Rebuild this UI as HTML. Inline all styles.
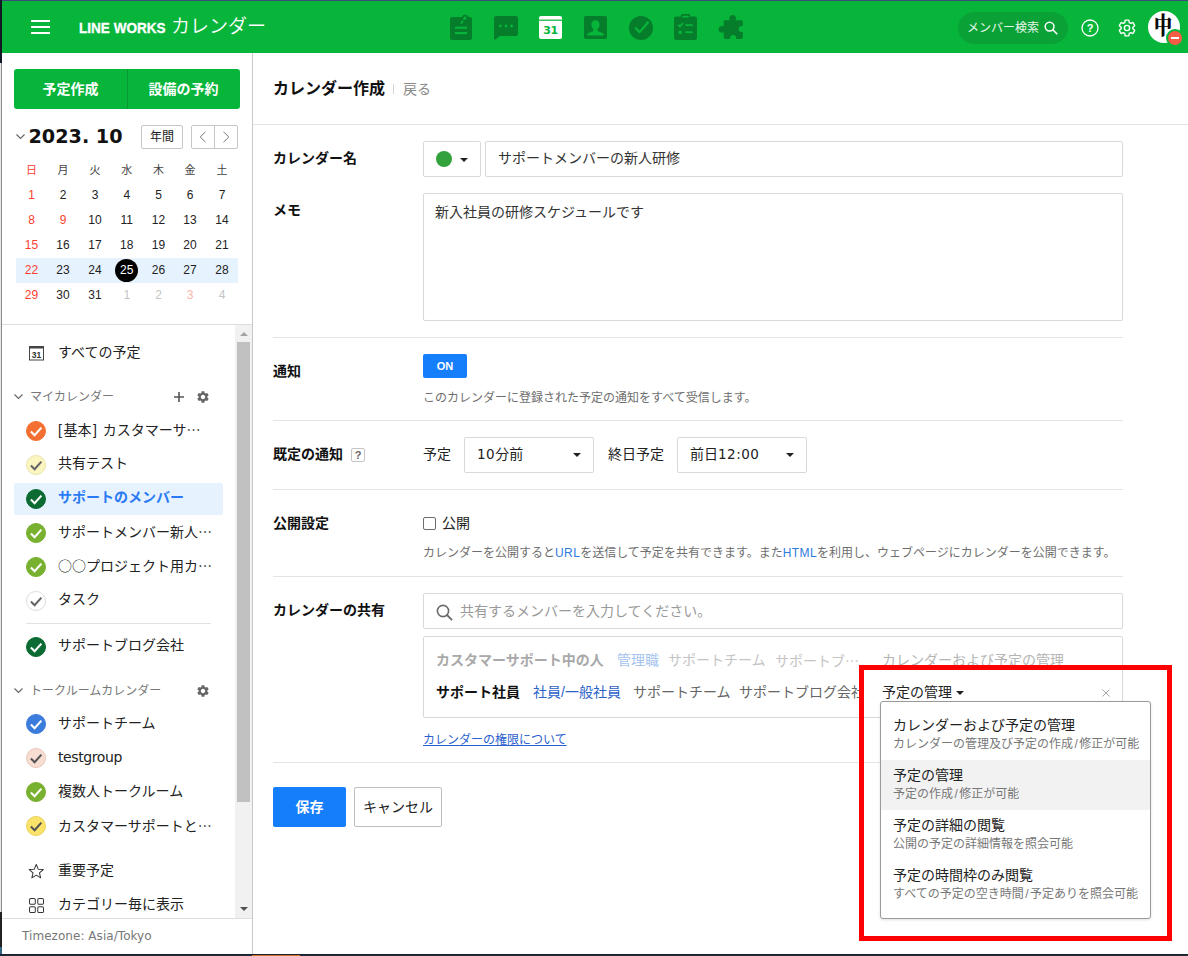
<!DOCTYPE html>
<html lang="ja">
<head>
<meta charset="utf-8">
<title>LINE WORKS カレンダー</title>
<style>
*{box-sizing:border-box;margin:0;padding:0}
html,body{width:1188px;height:956px;overflow:hidden;background:#fff}
body{position:relative;font-family:"Liberation Sans","Noto Sans CJK JP",sans-serif;font-size:14px;color:#222;-webkit-font-smoothing:antialiased}
.abs{position:absolute}
.dj{font-family:"DejaVu Sans","Liberation Sans",sans-serif;font-size:13.5px;letter-spacing:.5px}
.j{font-family:"Noto Sans CJK JP",sans-serif}
.t{position:absolute;white-space:nowrap;line-height:20px;height:20px}
/* window chrome edges */
#edgeL{left:0;top:0;width:2px;height:956px;background:linear-gradient(to right,#e6e6e6 0,#e6e6e6 1px,#8c8c8c 1px,#8c8c8c 2px)}
#edgeL2{left:0;top:0;width:2px;height:63px;background:#131826}
#edgeT{left:0;top:0;width:1188px;height:1px;background:#3e4b7c}
#edgeB{left:0;top:954px;width:1188px;height:2px;background:linear-gradient(#1a222b 0,#1a222b 1px,#222d38 1px)}
/* header */
#hdr{left:2px;top:1px;width:1186px;height:52px;background:#07b53b}
.hb{position:absolute;left:31px;width:19px;height:2px;background:#fff}
#brand{left:79px;top:17.5px;font:bold 15.5px/20px "Liberation Sans",sans-serif;color:#fff;transform:scaleX(.875);transform-origin:0 50%;-webkit-text-stroke:.35px #fff}
#appname{left:171px;top:14px;font-size:19px;line-height:26px;height:26px;color:#fff;font-weight:350}
#msearch{left:958px;top:12px;width:110px;height:32px;border-radius:16px;background:#0aa237}
#msearch span{position:absolute;left:9px;top:6px;font-size:12px;line-height:20px;color:#e6f6ea}
/* sidebar */
#sideBorder{left:252px;top:53px;width:1px;height:901px;background:#c8c8c8}
#btns{left:14px;top:69px;width:226px;height:40px;background:#07b53b;border-radius:3px}
#btns i{position:absolute;left:113px;top:0;width:1px;height:40px;background:#069a33}
#btns span{position:absolute;top:9.5px;width:113px;text-align:center;color:#fff;font-weight:bold;font-size:14px;line-height:20px}
#ym{left:28.5px;top:124px;font:bold 19.2px/26px "DejaVu Sans","Liberation Sans",sans-serif;color:#111;height:26px}
.sbtn{position:absolute;top:125px;height:24px;border:1px solid #c6c6c6;border-radius:2px;background:#fff}
.cal{position:absolute;width:32px;text-align:center;font-size:12px;line-height:20px;height:20px;color:#222}
.cal.wd{font-size:11px;color:#444}
.red{color:#fa3e30 !important}
.dim{color:#c4c4c4 !important}
.dimred{color:#fbb5ae !important}
#wkhl{left:16px;top:258px;width:222px;height:25px;background:#e6f2fe}
#today{left:115px;top:259px;width:23px;height:23px;border-radius:50%;background:#000}
#sep1{left:2px;top:324px;width:250px;height:1px;background:#dedede}
#sbtrack{left:235px;top:325px;width:17px;height:593px;background:#f1f1f1}
#sbthumb{left:237px;top:342px;width:13px;height:460px;background:#c1c1c1}
.item{position:absolute;left:58px;font-size:14px;line-height:22px;height:22px;white-space:nowrap;color:#222}
.grp{position:absolute;left:30px;font-size:12px;line-height:20px;height:20px;white-space:nowrap;color:#777}
.ck{position:absolute;left:26px;width:20px;height:20px}
#selhl{left:14px;top:483px;width:209px;height:32px;background:#e6f2fe;border-radius:2px}
#sep2{left:26px;top:623px;width:185px;height:1px;background:#e2e2e2}
#sep3{left:2px;top:918px;width:250px;height:1px;background:#dedede}
#tz{left:22px;top:926px;font:12px/20px "DejaVu Sans","Liberation Sans",sans-serif;color:#777;letter-spacing:0.05px}
/* main */
.hr{position:absolute;height:1px;background:#e4e4e4}
.lbl{position:absolute;left:273px;font-weight:bold;font-size:14px;line-height:20px;height:20px;white-space:nowrap;color:#111}
.box{position:absolute;border:1px solid #d9d9d9;border-radius:2px;background:#fff}
.desc{position:absolute;font-size:12px;line-height:18px;height:18px;white-space:nowrap;color:#6e6e6e}
.desc b{font-weight:normal;color:#2d7bdf;letter-spacing:.4px}
.caret{position:absolute;width:0;height:0;border-left:4px solid transparent;border-right:4px solid transparent;border-top:4px solid #222}
</style>
</head>
<body>
<div class="abs" id="hdr"></div>
<div class="abs" id="edgeT"></div>
<div class="abs" id="edgeL"></div>
<div class="abs" id="edgeL2"></div>
<div class="abs" style="left:0;top:912px;width:2px;height:35px;background:#222"></div><div class="abs" style="left:0;top:947px;width:2px;height:7px;background:#2f6686"></div>
<div class="abs" id="edgeB"></div>
<div class="abs" style="left:252px;top:955px;width:48px;height:1px;background:#c8742c"></div>

<!-- HEADER -->
<div class="hb" style="top:20px"></div><div class="hb" style="top:26px"></div><div class="hb" style="top:32px"></div>
<div class="t" id="brand">LINE WORKS</div>
<div class="t" id="appname">カレンダー</div>
<!--HDRICONS-->
<svg class="abs" style="left:450px;top:14px" width="22" height="26" viewBox="0 0 22 26"><rect x="0" y="3" width="22" height="23" rx="2.2" fill="#067d2b"/><path d="M11 9.5 L15.2 3.6" stroke="#067d2b" stroke-width="5" stroke-linecap="round"/><path d="M11.2 9.2 L14.6 4.4" stroke="#07b53b" stroke-width="1.6" stroke-linecap="round"/><circle cx="14.9" cy="4" r="1.7" fill="#07b53b"/><circle cx="14.9" cy="4" r="2.6" fill="none" stroke="#067d2b" stroke-width="1.2"/><rect x="5" y="12.6" width="12" height="2.2" fill="#07b53b"/><rect x="5" y="18" width="12" height="2.2" fill="#07b53b"/></svg>
<svg class="abs" style="left:494px;top:16px" width="24" height="24" viewBox="0 0 24 24"><path d="M2 0 H22 a2 2 0 0 1 2 2 V18 a2 2 0 0 1 -2 2 H6 L1.2 23.6 Q0 24.3 0 23 V2 a2 2 0 0 1 2 -2 Z" fill="#067d2b"/><circle cx="6.4" cy="10" r="1.4" fill="#07b53b"/><circle cx="12" cy="10" r="1.4" fill="#07b53b"/><circle cx="17.6" cy="10" r="1.4" fill="#07b53b"/></svg>
<svg class="abs" style="left:539px;top:16px" width="23" height="23" viewBox="0 0 23 23"><rect x="0" y="0" width="23" height="23" rx="2" fill="#fff"/><rect x="0" y="3.6" width="23" height="1.2" fill="#07b53b"/><text x="11.5" y="18.2" font-family="DejaVu Sans,Liberation Sans,sans-serif" font-weight="bold" font-size="11" text-anchor="middle" fill="#07b53b" letter-spacing="-0.3">31</text></svg>
<svg class="abs" style="left:584px;top:16px" width="23" height="23" viewBox="0 0 23 23"><rect x="0" y="0" width="23" height="23" rx="2" fill="#067d2b"/><path d="M11.5 4.2 c2.6 0 4.1 1.9 4.1 4.4 c0 1.9 -0.9 3.6 -2 4.5 v1.3 c0 .5 .3 .8 .8 1 l4.300 1.7 c.7 .3 1 .8 1 1.400 V19.6 H3.300 V18.500 c0 -.6 .3 -1.100 1 -1.400 l4.300 -1.700 c.5 -.2 .8 -.5 .8 -1 v-1.300 c-1.100 -.9 -2 -2.600 -2 -4.500 c0 -2.500 1.500 -4.400 4.100 -4.400 z" fill="#07b53b"/></svg>
<svg class="abs" style="left:629px;top:16px" width="24" height="24" viewBox="0 0 24 24"><circle cx="12" cy="12" r="12" fill="#067d2b"/><path d="M6.2 11.6 L10.6 16.2 L19.5 5.8" fill="none" stroke="#07b53b" stroke-width="2.2" stroke-linejoin="miter"/></svg>
<svg class="abs" style="left:674px;top:14px" width="23" height="26" viewBox="0 0 23 26"><rect x="0" y="2.4" width="23" height="23.6" rx="2.2" fill="#067d2b"/><rect x="6.8" y="0" width="9.4" height="5.4" rx="1.6" fill="#067d2b"/><rect x="8.200" y="1.700" width="6.600" height="1.900" rx=".9" fill="#07b53b"/><path d="M4.200 10.800 L5.900 12.500 L9 9.200" fill="none" stroke="#07b53b" stroke-width="1.700"/><rect x="11.400" y="10.200" width="7.400" height="1.800" fill="#07b53b"/><circle cx="6.200" cy="18.200" r="1.800" fill="#07b53b"/><rect x="11.400" y="17.300" width="7.400" height="1.800" fill="#07b53b"/></svg>
<svg class="abs" style="left:718px;top:14px" width="26" height="26" viewBox="0 0 26 26"><path d="M6.500 6.200 H11.800 C11 4.800 11.300 1 14.700 1 C18.100 1 18.400 4.800 17.600 6.200 H23 a1.800 1.800 0 0 1 1.800 1.800 V12.300 C23.400 11.500 20.600 12 20.600 15 C20.600 18 23.400 18.500 24.800 17.700 V23.200 a1.800 1.800 0 0 1 -1.800 1.800 H18 C18.600 23.600 18 21 15.200 21 C12.400 21 11.800 23.600 12.400 25 H7.500 a1.800 1.800 0 0 1 -1.800 -1.800 V18.300 C4.500 19.200 0.600 19.200 0.600 15.300 C0.600 11.400 4.500 11.500 5.700 12.400 V7 a.8 .8 0 0 1 .8 -.8 Z" fill="#067d2b"/></svg>
<!--/HDRICONS-->
<div class="abs" id="msearch"><span>メンバー検索</span></div>
<!--HDRRIGHT-->
<svg class="abs" style="left:1044px;top:21px" width="14" height="14" viewBox="0 0 14 14"><circle cx="5.600" cy="5.600" r="4.400" fill="none" stroke="#fff" stroke-width="1.500"/><path d="M8.800 8.800 L12.800 12.800" stroke="#fff" stroke-width="1.600" stroke-linecap="round"/></svg>
<svg class="abs" style="left:1081px;top:19px" width="18" height="18" viewBox="0 0 18 18"><circle cx="9" cy="9" r="8" fill="none" stroke="#fff" stroke-width="1.300"/><text x="9" y="13" font-family="Liberation Sans,sans-serif" font-weight="bold" font-size="11" text-anchor="middle" fill="#fff">?</text></svg>
<svg class="abs" style="left:1118px;top:19px" width="18" height="18" viewBox="1 1 22 22"><path d="M19.14 12.94c.04-.3.06-.61.06-.94 0-.32-.02-.64-.07-.94l2.03-1.58a.49.49 0 0 0 .12-.61l-1.92-3.32a.488.488 0 0 0-.59-.22l-2.39.96c-.5-.38-1.03-.7-1.62-.94l-.36-2.54a.484.484 0 0 0-.48-.41h-3.84c-.24 0-.43.17-.47.41l-.36 2.54c-.59.24-1.13.57-1.62.94l-2.39-.96c-.22-.08-.47 0-.59.22L2.740 8.870c-.12.21-.08.47.12.61l2.030 1.580c-.05.3-.09.63-.09.94s.02.640.07.940l-2.030 1.580a.49.49 0 0 0-.12.610l1.920 3.320c.12.220.370.290.590.220l2.390-.960c.5.380 1.030.7 1.620.940l.36 2.540c.05.240.240.410.480.410h3.840c.240 0 .440-.170.470-.410l.36-2.540c.590-.240 1.130-.560 1.620-.940l2.390.960c.220.080.470 0 .590-.220l1.920-3.320c.12-.220.070-.470-.12-.610l-2.010-1.580z" fill="none" stroke="#fff" stroke-width="1.700" stroke-linejoin="round"/><circle cx="12" cy="12" r="3.200" fill="none" stroke="#fff" stroke-width="1.700"/></svg>
<div class="abs" style="left:1148px;top:11px;width:32px;height:32px;border-radius:50%;background:#fff;overflow:hidden"><span style="position:absolute;left:3.500px;top:-3px;font-family:'Noto Serif CJK SC','Noto Sans CJK JP',serif;font-weight:900;font-size:22px;line-height:32px;color:#0a0a0a;display:block;transform:scale(.82,1.08);transform-origin:11px 16px">中</span></div>
<div class="abs" style="left:1166px;top:29px;width:18px;height:18px;border-radius:50%;background:#f95c44;border:2px solid #07b53b"><i style="position:absolute;left:3px;top:6px;width:8px;height:2px;background:#fff"></i></div>
<!--/HDRRIGHT-->

<!-- SIDEBAR -->
<div class="abs" id="sideBorder"></div>
<div class="abs" id="btns"><i></i><span style="left:0">予定作成</span><span style="left:113px">設備の予約</span></div>
<!--SIDEBAR-->
<svg class="abs" style="left:16px;top:134px" width="9" height="6" viewBox="0 0 9 6"><path d="M0.5 0.5 L4.5 4.5 L8.5 0.5" fill="none" stroke="#666" stroke-width="1.2"/></svg>
<div class="t" id="ym">2023. 10</div>
<div class="sbtn" style="left:141px;width:42px"><span style="position:absolute;left:0;width:40px;text-align:center;top:1px;font-size:12px;line-height:20px;color:#222">年間</span></div>
<div class="sbtn" style="left:191px;width:47px"><i style="position:absolute;left:22px;top:0;width:1px;height:22px;background:#c6c6c6"></i><svg style="position:absolute;left:7px;top:5px" width="8" height="12" viewBox="0 0 8 12"><path d="M6.5 0.8 L1.2 6 L6.5 11.2" fill="none" stroke="#777" stroke-width="1"/></svg><svg style="position:absolute;left:30px;top:5px" width="8" height="12" viewBox="0 0 8 12"><path d="M1.5 0.8 L6.8 6 L1.5 11.2" fill="none" stroke="#777" stroke-width="1"/></svg></div>
<div class="abs" id="wkhl"></div><div class="abs" id="today"></div>
<div class="cal wd red" style="left:15.5px;top:160px">日</div>
<div class="cal wd" style="left:47.0px;top:160px">月</div>
<div class="cal wd" style="left:79.0px;top:160px">火</div>
<div class="cal wd" style="left:110.8px;top:160px">水</div>
<div class="cal wd" style="left:142.5px;top:160px">木</div>
<div class="cal wd" style="left:174.0px;top:160px">金</div>
<div class="cal wd" style="left:206.0px;top:160px">土</div>
<div class="cal red" style="left:15.5px;top:185px">1</div>
<div class="cal" style="left:47.0px;top:185px">2</div>
<div class="cal" style="left:79.0px;top:185px">3</div>
<div class="cal" style="left:110.8px;top:185px">4</div>
<div class="cal" style="left:142.5px;top:185px">5</div>
<div class="cal" style="left:174.0px;top:185px">6</div>
<div class="cal" style="left:206.0px;top:185px">7</div>
<div class="cal red" style="left:15.5px;top:210px">8</div>
<div class="cal red" style="left:47.0px;top:210px">9</div>
<div class="cal" style="left:79.0px;top:210px">10</div>
<div class="cal" style="left:110.8px;top:210px">11</div>
<div class="cal" style="left:142.5px;top:210px">12</div>
<div class="cal" style="left:174.0px;top:210px">13</div>
<div class="cal" style="left:206.0px;top:210px">14</div>
<div class="cal red" style="left:15.5px;top:235px">15</div>
<div class="cal" style="left:47.0px;top:235px">16</div>
<div class="cal" style="left:79.0px;top:235px">17</div>
<div class="cal" style="left:110.8px;top:235px">18</div>
<div class="cal" style="left:142.5px;top:235px">19</div>
<div class="cal" style="left:174.0px;top:235px">20</div>
<div class="cal" style="left:206.0px;top:235px">21</div>
<div class="cal red" style="left:15.5px;top:260px">22</div>
<div class="cal" style="left:47.0px;top:260px">23</div>
<div class="cal" style="left:79.0px;top:260px">24</div>
<div class="cal" style="color:#fff;left:110.8px;top:260px">25</div>
<div class="cal" style="left:142.5px;top:260px">26</div>
<div class="cal" style="left:174.0px;top:260px">27</div>
<div class="cal" style="left:206.0px;top:260px">28</div>
<div class="cal red" style="left:15.5px;top:285px">29</div>
<div class="cal" style="left:47.0px;top:285px">30</div>
<div class="cal" style="left:79.0px;top:285px">31</div>
<div class="cal dim" style="left:110.8px;top:285px">1</div>
<div class="cal dim" style="left:142.5px;top:285px">2</div>
<div class="cal dimred" style="left:174.0px;top:285px">3</div>
<div class="cal dim" style="left:206.0px;top:285px">4</div>
<div class="abs" id="sep1"></div>
<div class="abs" id="sbtrack"></div><div class="abs" id="sbthumb"></div>
<div class="abs" style="left:240px;top:332px;width:0;height:0;border-left:4px solid transparent;border-right:4px solid transparent;border-bottom:4px solid #a3a3a3"></div>
<div class="abs" style="left:240px;top:907px;width:0;height:0;border-left:4px solid transparent;border-right:4px solid transparent;border-top:4px solid #505050"></div>
<svg class="abs" style="left:29px;top:345px" width="16" height="16" viewBox="0 0 16 16"><rect x="0.5" y="1.5" width="14" height="13.5" fill="#fff" stroke="#444" stroke-width="1"/><rect x="0.5" y="1.5" width="14" height="2" fill="#444"/><text x="7.5" y="12.8" font-family="Liberation Sans,sans-serif" font-weight="bold" font-size="8.5" text-anchor="middle" fill="#333">31</text></svg>
<div class="item" style="top:341px">すべての予定</div>
<svg class="abs" style="left:14px;top:394px" width="9" height="6" viewBox="0 0 9 6"><path d="M0.5 0.5 L4.5 4.5 L8.5 0.5" fill="none" stroke="#666" stroke-width="1.2"/></svg>
<div class="grp" style="top:387px">マイカレンダー</div>
<svg class="abs" style="left:174px;top:392px" width="10" height="10" viewBox="0 0 10 10"><path d="M5 0v10M0 5h10" stroke="#555" stroke-width="1.6"/></svg>
<svg class="abs" style="left:197px;top:391px" width="12" height="12" viewBox="2 2 20 20"><path fill="#666" d="M19.14 12.94c.04-.3.06-.61.06-.94 0-.32-.02-.64-.07-.94l2.03-1.58a.49.49 0 0 0 .12-.61l-1.92-3.32a.488.488 0 0 0-.59-.22l-2.39.96c-.5-.38-1.03-.7-1.62-.94l-.36-2.54a.484.484 0 0 0-.48-.41h-3.84c-.24 0-.43.17-.47.41l-.36 2.54c-.59.24-1.13.57-1.62.94l-2.39-.96c-.22-.08-.47 0-.59.22L2.74 8.87c-.12.21-.08.47.12.61l2.03 1.58c-.05.3-.09.63-.09.94s.02.64.07.94l-2.03 1.58a.49.49 0 0 0-.12.61l1.92 3.32c.12.22.37.29.59.22l2.39-.96c.5.38 1.03.7 1.62.94l.36 2.54c.05.24.24.41.48.41h3.84c.24 0 .44-.17.47-.41l.36-2.54c.59-.24 1.13-.56 1.62-.94l2.39.96c.22.08.47 0 .59-.22l1.92-3.32c.12-.22.07-.47-.12-.61l-2.01-1.58zM12 15.6c-1.98 0-3.600-1.62-3.600-3.600s1.620-3.600 3.600-3.600 3.600 1.620 3.600 3.600-1.620 3.600-3.600 3.600z"/></svg>
<div class="abs" id="selhl"></div>
<svg class="ck" style="top:420.5px" viewBox="0 0 20 20"><circle cx="10" cy="10" r="9.5" fill="#f47032" stroke="#f47032" stroke-width="1"/><path d="M4.9 10.6 L8.6 14.2 L15.4 6.6" fill="none" stroke="#fff" stroke-width="2.1" stroke-linejoin="miter"/></svg>
<div class="item" style="top:418.0px"><span style="margin-right:1.5px">[</span>基本<span style="margin-left:1.5px;margin-right:2px">]</span> カスタマーサ<span class="j">…</span></div>
<svg class="ck" style="top:454.5px" viewBox="0 0 20 20"><circle cx="10" cy="10" r="9.5" fill="#fbf6c0" stroke="#e9e2ae" stroke-width="1"/><path d="M4.9 10.6 L8.6 14.2 L15.4 6.6" fill="none" stroke="#666" stroke-width="2.1" stroke-linejoin="miter"/></svg>
<div class="item" style="top:452.0px">共有テスト</div>
<svg class="ck" style="top:488.5px" viewBox="0 0 20 20"><circle cx="10" cy="10" r="9.5" fill="#0b6b33" stroke="#0b6b33" stroke-width="1"/><path d="M4.9 10.6 L8.6 14.2 L15.4 6.6" fill="none" stroke="#fff" stroke-width="2.1" stroke-linejoin="miter"/></svg>
<div class="item" style="color:#2a7af5;font-weight:bold;top:486.0px">サポートのメンバー</div>
<svg class="ck" style="top:522.5px" viewBox="0 0 20 20"><circle cx="10" cy="10" r="9.5" fill="#77b12f" stroke="#77b12f" stroke-width="1"/><path d="M4.9 10.6 L8.6 14.2 L15.4 6.6" fill="none" stroke="#fff" stroke-width="2.1" stroke-linejoin="miter"/></svg>
<div class="item" style="top:520.0px">サポートメンバー新人<span class="j">…</span></div>
<svg class="ck" style="top:556.5px" viewBox="0 0 20 20"><circle cx="10" cy="10" r="9.5" fill="#77b12f" stroke="#77b12f" stroke-width="1"/><path d="M4.9 10.6 L8.6 14.2 L15.4 6.6" fill="none" stroke="#fff" stroke-width="2.1" stroke-linejoin="miter"/></svg>
<div class="item" style="top:554.0px"><span class="j">○○</span>プロジェクト用カ<span class="j">…</span></div>
<svg class="ck" style="top:590.5px" viewBox="0 0 20 20"><circle cx="10" cy="10" r="9.5" fill="#fff" stroke="#dcdcdc" stroke-width="1"/><path d="M4.9 10.6 L8.6 14.2 L15.4 6.6" fill="none" stroke="#666" stroke-width="2.1" stroke-linejoin="miter"/></svg>
<div class="item" style="top:588.0px">タスク</div>
<svg class="ck" style="top:636.5px" viewBox="0 0 20 20"><circle cx="10" cy="10" r="9.5" fill="#0b6b33" stroke="#0b6b33" stroke-width="1"/><path d="M4.9 10.6 L8.6 14.2 L15.4 6.6" fill="none" stroke="#fff" stroke-width="2.1" stroke-linejoin="miter"/></svg>
<div class="item" style="top:634.0px">サポートブログ会社</div>
<div class="abs" id="sep2"></div>
<svg class="abs" style="left:14px;top:688px" width="9" height="6" viewBox="0 0 9 6"><path d="M0.5 0.5 L4.5 4.5 L8.5 0.5" fill="none" stroke="#666" stroke-width="1.2"/></svg>
<div class="grp" style="top:681px">トークルームカレンダー</div>
<svg class="abs" style="left:197px;top:685px" width="12" height="12" viewBox="2 2 20 20"><path fill="#666" d="M19.14 12.94c.04-.3.06-.61.06-.94 0-.32-.02-.64-.07-.94l2.03-1.58a.49.49 0 0 0 .12-.61l-1.92-3.32a.488.488 0 0 0-.59-.22l-2.39.96c-.5-.38-1.03-.7-1.62-.94l-.36-2.54a.484.484 0 0 0-.48-.41h-3.84c-.24 0-.43.17-.47.41l-.36 2.54c-.59.24-1.13.57-1.62.94l-2.39-.96c-.22-.08-.47 0-.59.22L2.74 8.87c-.12.21-.08.47.12.61l2.03 1.58c-.05.3-.09.63-.09.94s.02.64.07.94l-2.03 1.58a.49.49 0 0 0-.12.61l1.92 3.32c.12.22.37.29.59.22l2.39-.96c.5.38 1.03.7 1.62.94l.36 2.54c.05.24.24.41.48.41h3.84c.24 0 .44-.17.47-.41l.36-2.54c.59-.24 1.13-.56 1.62-.94l2.39.96c.22.08.47 0 .59-.22l1.92-3.32c.12-.22.07-.47-.12-.61l-2.01-1.58zM12 15.6c-1.98 0-3.600-1.62-3.600-3.600s1.620-3.600 3.600-3.600 3.600 1.620 3.600 3.600-1.620 3.600-3.600 3.600z"/></svg>
<svg class="ck" style="top:714px" viewBox="0 0 20 20"><circle cx="10" cy="10" r="9.5" fill="#3b7bdb" stroke="#3b7bdb" stroke-width="1"/><path d="M4.9 10.6 L8.6 14.2 L15.4 6.6" fill="none" stroke="#fff" stroke-width="2.1" stroke-linejoin="miter"/></svg>
<div class="item" style="top:711.5px">サポートチーム</div>
<svg class="ck" style="top:748px" viewBox="0 0 20 20"><circle cx="10" cy="10" r="9.5" fill="#f8ddd3" stroke="#e9c6ba" stroke-width="1"/><path d="M4.9 10.6 L8.6 14.2 L15.4 6.6" fill="none" stroke="#555" stroke-width="2.1" stroke-linejoin="miter"/></svg>
<div class="item" style="font-family:'DejaVu Sans','Liberation Sans',sans-serif;font-size:14px;letter-spacing:-0.4px;top:745.5px">testgroup</div>
<svg class="ck" style="top:782px" viewBox="0 0 20 20"><circle cx="10" cy="10" r="9.5" fill="#77b12f" stroke="#77b12f" stroke-width="1"/><path d="M4.9 10.6 L8.6 14.2 L15.4 6.6" fill="none" stroke="#fff" stroke-width="2.1" stroke-linejoin="miter"/></svg>
<div class="item" style="top:779.5px">複数人トークルーム</div>
<svg class="ck" style="top:816px" viewBox="0 0 20 20"><circle cx="10" cy="10" r="9.5" fill="#fbe36a" stroke="#e9d15a" stroke-width="1"/><path d="M4.9 10.6 L8.6 14.2 L15.4 6.6" fill="none" stroke="#555" stroke-width="2.1" stroke-linejoin="miter"/></svg>
<div class="item" style="top:813.5px">カスタマーサポートと<span class="j">…</span></div>
<svg class="abs" style="left:28px;top:863px" width="16.500" height="16.500" viewBox="0 0 18 18"><path d="M9 1.6 L11.2 6.7 L16.7 7.2 L12.5 10.8 L13.8 16.2 L9 13.3 L4.2 16.2 L5.5 10.8 L1.3 7.2 L6.8 6.7 Z" fill="none" stroke="#333" stroke-width="1.1" stroke-linejoin="round"/></svg>
<div class="item" style="top:858.5px">重要予定</div>
<svg class="abs" style="left:28.500px;top:898px" width="15.500" height="15.500" viewBox="0 0 17 17"><g fill="none" stroke="#333" stroke-width="1.1"><rect x="0.6" y="0.6" width="6.3" height="6.3" rx="1.5"/><rect x="9.6" y="0.6" width="6.3" height="6.3" rx="1.5"/><rect x="0.6" y="9.6" width="6.3" height="6.3" rx="1.5"/><rect x="9.6" y="9.6" width="6.3" height="6.3" rx="1.5"/></g></svg>
<div class="item" style="top:892.5px">カテゴリー毎に表示</div>
<div class="abs" style="left:2px;top:919px;width:250px;height:35px;background:#fff"></div>
<div class="abs" id="sep3"></div>
<div class="t" id="tz">Timezone: Asia/Tokyo</div>
<!--/SIDEBAR-->

<!-- MAIN -->
<!--MAIN-->
<div class="t" style="left:273px;top:79px;font-size:16px;font-weight:bold;color:#111">カレンダー作成</div>
<div class="abs" style="left:393px;top:84px;width:1px;height:10px;background:#d5d5d5"></div>
<div class="t" style="left:403px;top:79px;font-size:14px;color:#888">戻る</div>
<div class="hr" style="left:253px;top:124px;width:935px"></div>
<div class="lbl" style="top:148px">カレンダー名</div>
<div class="box" style="left:423px;top:141px;width:58px;height:36px"><i style="position:absolute;left:12px;top:9px;width:16px;height:16px;border-radius:50%;background:#33a23d"></i><i class="caret" style="left:36px;top:16px"></i></div>
<div class="box" style="left:485px;top:141px;width:638px;height:36px"><span class="t" style="left:12px;top:6px;font-size:14px;color:#333">サポートメンバーの新人研修</span></div>
<div class="lbl" style="top:200px">メモ</div>
<div class="box" style="left:423px;top:193px;width:700px;height:128px"><span class="t" style="left:11px;top:8px;font-size:14px;color:#333">新入社員の研修スケジュールです</span></div>
<div class="hr" style="left:273px;top:337px;width:850px"></div>
<div class="lbl" style="top:361px">通知</div>
<div class="abs" style="left:423px;top:354px;width:44px;height:24px;border-radius:2px;background:#157efb"><span style="position:absolute;left:0;width:44px;text-align:center;top:2px;font:bold 11px/20px 'Liberation Sans',sans-serif;color:#fff">ON</span></div>
<div class="desc" style="left:423px;top:389px">このカレンダーに登録された予定の通知をすべて受信します。</div>
<div class="hr" style="left:273px;top:420px;width:850px"></div>
<div class="lbl" style="top:444px">既定の通知</div>
<div class="abs" style="left:351px;top:448px;width:14px;height:14px;border:1px solid #c4c4c4;border-radius:2px"><span style="position:absolute;left:0;width:12px;text-align:center;top:0;font:bold 11px/13px 'Liberation Sans',sans-serif;color:#666">?</span></div>
<div class="t" style="left:423px;top:444px;font-size:14px;color:#222">予定</div>
<div class="box" style="left:464px;top:437px;width:130px;height:36px"><span class="t" style="left:12px;top:6px;font-size:14px;color:#222"><span class="dj">10</span>分前</span><i class="caret" style="left:108px;top:15px"></i></div>
<div class="t" style="left:608px;top:444px;font-size:14px;color:#222">終日予定</div>
<div class="box" style="left:677px;top:437px;width:130px;height:36px"><span class="t" style="left:12px;top:6px;font-size:14px;color:#222">前日<span class="dj">12:00</span></span><i class="caret" style="left:108px;top:15px"></i></div>
<div class="hr" style="left:273px;top:489px;width:850px"></div>
<div class="lbl" style="top:513px">公開設定</div>
<div class="abs" style="left:423px;top:517px;width:13px;height:13px;border:1px solid #6d6d6d;border-radius:2px;background:#fff"></div>
<div class="t" style="left:442px;top:513px;font-size:14px;color:#222">公開</div>
<div class="desc" style="left:423px;top:544px">カレンダーを公開すると<b>URL</b>を送信して予定を共有できます。また<b>HTML</b>を利用し、ウェブページにカレンダーを公開できます。</div>
<div class="hr" style="left:273px;top:576px;width:850px"></div>
<div class="lbl" style="top:600px">カレンダーの共有</div>
<div class="box" style="left:423px;top:593px;width:700px;height:36px"><svg style="position:absolute;left:12px;top:9.500px" width="17" height="17" viewBox="0 0 17 17"><circle cx="7" cy="7" r="5.600" fill="none" stroke="#6a6a6a" stroke-width="1.600"/><path d="M11 11 L15.600 15.600" stroke="#6a6a6a" stroke-width="1.800" stroke-linecap="round"/></svg><span class="t" style="left:36px;top:7px;font-size:14px;color:#999">共有するメンバーを入力してください。</span></div>
<div class="box" style="left:423px;top:636px;width:700px;height:82px"></div>
<div class="t" style="left:436px;top:650px;font-size:14px;font-weight:bold;color:#a9a9a9">カスタマーサポート中の人</div>
<div class="t" style="left:617px;top:650px;font-size:14px;color:#a5c4ee">管理職</div>
<div class="t" style="left:668px;top:650px;font-size:14px;color:#c4c4c4">サポートチーム</div>
<div class="t" style="left:775px;top:650px;font-size:14px;color:#c4c4c4">サポートブ<span class="j">…</span></div>
<div class="t" style="left:882px;top:650px;font-size:14px;color:#b4b4b4">カレンダーおよび予定の管理</div>
<div class="t" style="left:436px;top:682px;font-size:14px;font-weight:bold;color:#111">サポート社員</div>
<div class="t" style="left:533px;top:682px;font-size:14px;color:#2b62c8">社員/一般社員</div>
<div class="t" style="left:633px;top:682px;font-size:14px;color:#666">サポートチーム</div>
<div class="t" style="left:739px;top:682px;font-size:14px;color:#666;width:124px;overflow:hidden">サポートブログ会社</div>
<div class="t" style="left:882px;top:682px;font-size:14px;color:#222">予定の管理</div>
<i class="caret" style="left:956px;top:691px"></i>
<svg class="abs" style="left:1102px;top:688.500px" width="8" height="8" viewBox="0 0 9 9"><path d="M0.500 0.500 L8.500 8.500 M8.500 0.500 L0.500 8.500" stroke="#999" stroke-width="1"/></svg>
<div class="t" style="left:423px;top:730px;font-size:12px;color:#2b5fd0;text-decoration:underline">カレンダーの権限について</div>
<div class="hr" style="left:273px;top:762px;width:850px"></div>
<div class="abs" style="left:273px;top:787px;width:73px;height:40px;border-radius:2px;background:#157efb"><span style="position:absolute;left:0;width:73px;text-align:center;top:10px;font-size:14px;font-weight:bold;line-height:20px;color:#fff">保存</span></div>
<div class="abs" style="left:354px;top:787px;width:88px;height:40px;border-radius:2px;border:1px solid #bdbdbd;background:#fff"><span style="position:absolute;left:0;width:86px;text-align:center;top:9px;font-size:14px;line-height:20px;color:#222">キャンセル</span></div>
<div class="abs" style="left:880px;top:701px;width:271px;height:218px;border:1px solid #9a9a9a;border-radius:3px;background:#fff;box-shadow:0 1px 3px rgba(0,0,0,.12)"></div>
<div class="abs" style="left:881px;top:760px;width:269px;height:50px;background:#f2f2f2"></div>
<div class="t" style="left:893px;top:715px;font-size:14px;color:#222">カレンダーおよび予定の管理</div>
<div class="desc" style="left:893px;top:735px;color:#777">カレンダーの管理及び予定の作成<span style="margin:0 1.5px">/</span>修正が可能</div>
<div class="t" style="left:893px;top:765px;font-size:14px;color:#222">予定の管理</div>
<div class="desc" style="left:893px;top:785px;color:#777">予定の作成<span style="margin:0 1.5px">/</span>修正が可能</div>
<div class="t" style="left:893px;top:815px;font-size:14px;color:#222">予定の詳細の閲覧</div>
<div class="desc" style="left:893px;top:835px;color:#777">公開の予定の詳細情報を照会可能</div>
<div class="t" style="left:893px;top:865px;font-size:14px;color:#222">予定の時間枠のみ閲覧</div>
<div class="desc" style="left:893px;top:885px;color:#777">すべての予定の空き時間<span style="margin:0 1.5px">/</span>予定ありを照会可能</div>
<div class="abs" style="left:859px;top:665px;width:313px;height:276px;border:5px solid #f00"></div>
<!--/MAIN-->

</body>
</html>
